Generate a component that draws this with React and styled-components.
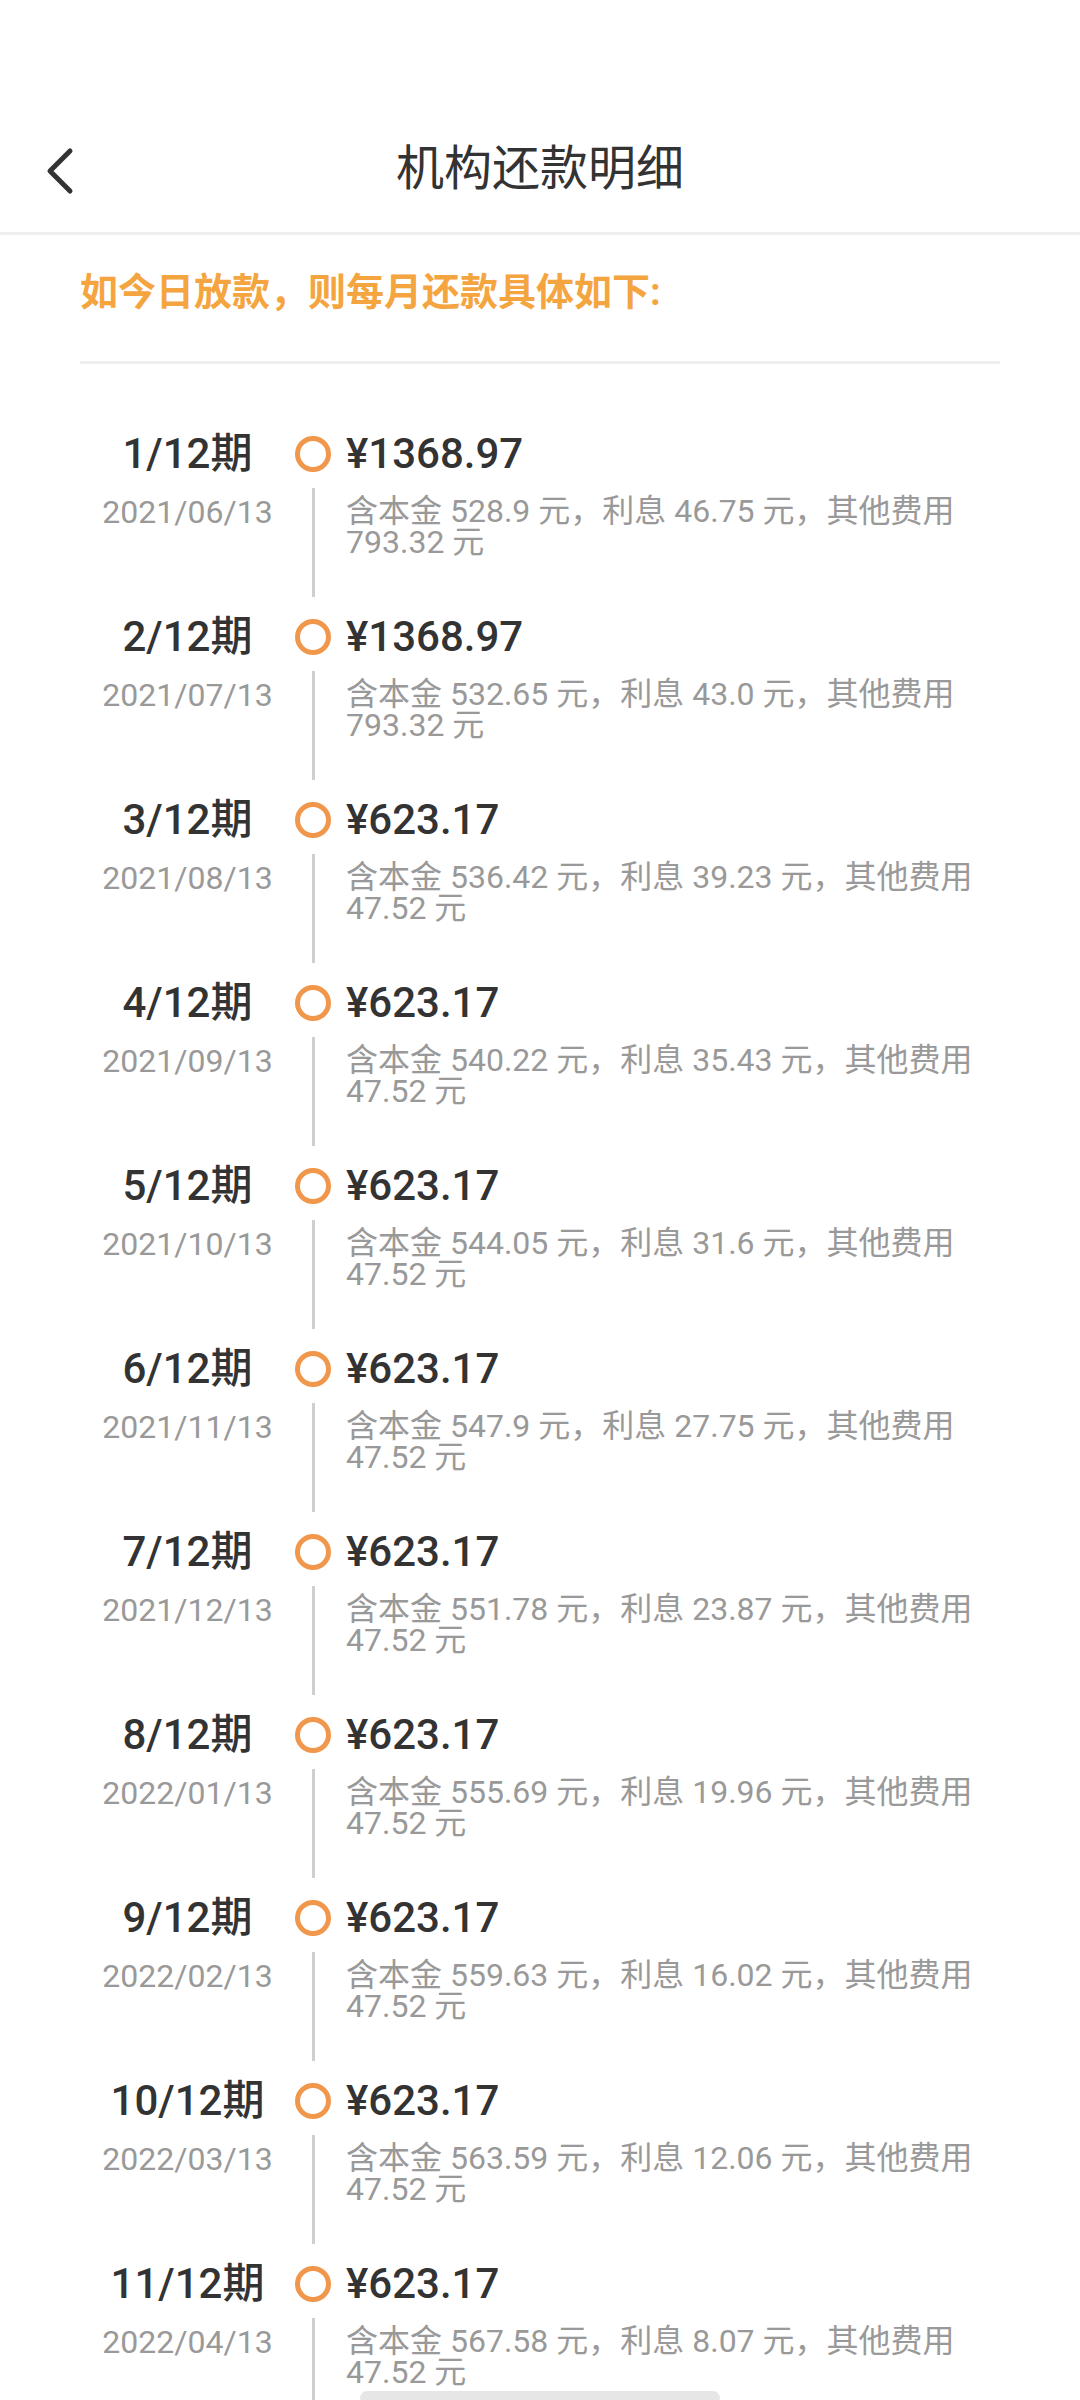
import React from 'react'
import styled, { createGlobalStyle } from 'styled-components'

const GlobalStyle = createGlobalStyle`
  body {
    margin: 0;
    background: #fff;
    font-family: Roboto, "Noto Sans CJK SC", sans-serif;
    color: #333;
  }
`

const Page = styled.div`
  width: 1080px;
  min-height: 2400px;
  background: #fff;
`

const Header = styled.header`
  padding-top: 106px;
  border-bottom: 3px solid #eeeeee;
`

const Toolbar = styled.div`
  height: 126px;
  display: grid;
  grid-template-columns: 140px 1fr 140px;
  align-items: center;
`

const BackButton = styled.button`
  border: 0;
  background: none;
  padding: 0 0 0 44px;
  height: 60px;
  display: flex;
  align-items: center;
  justify-content: flex-start;
  margin-top: 6px;
`

const Title = styled.h1`
  margin: 0;
  text-align: center;
  font-size: 48px;
  font-weight: 400;
  color: #333;
  line-height: 60px;
`

const Intro = styled.div`
  margin: 0 80px;
  padding: 32px 0 44px;
  border-bottom: 3px solid #eeeeee;
  font-size: 38px;
  line-height: 50px;
  font-weight: 700;
  color: #f5a53f;
`

const List = styled.ul`
  list-style: none;
  margin: 0;
  padding: 66px 80px 0;
`

const Item = styled.li`
  display: grid;
  grid-template-columns: 215px 36px 1fr;
  grid-template-rows: 48px 109px;
  row-gap: 10px;
  padding-bottom: 16px;
`

const Period = styled.div`
  align-self: center;
  text-align: center;
  font-size: 42px;
  font-weight: 500;
  color: #333;
  line-height: 48px;
`

const Dot = styled.span`
  align-self: center;
  box-sizing: border-box;
  width: 36px;
  height: 36px;
  border-radius: 50%;
  border: 5px solid #f0974b;
`

const Amount = styled.div`
  align-self: center;
  padding-left: 15px;
  font-size: 42px;
  font-weight: 500;
  color: #333;
  line-height: 48px;
`

const DueDate = styled.div`
  padding-top: 9px;
  text-align: center;
  font-size: 32px;
  line-height: 31px;
  color: #999;
`

const Rail = styled.span`
  justify-self: center;
  width: 3px;
  background: #cfcfcf;
`

const Detail = styled.div`
  padding: 8px 0 0 15px;
  font-size: 32px;
  line-height: 31px;
  color: #999;
`

const HomeBar = styled.div`
  position: fixed;
  left: 360px;
  bottom: -5px;
  width: 360px;
  height: 14px;
  border-radius: 7px;
  background: #e6e6e6;
`

const plans = [
  ['2021/06/13', '1368.97', '528.9', '46.75', '793.32'],
  ['2021/07/13', '1368.97', '532.65', '43.0', '793.32'],
  ['2021/08/13', '623.17', '536.42', '39.23', '47.52'],
  ['2021/09/13', '623.17', '540.22', '35.43', '47.52'],
  ['2021/10/13', '623.17', '544.05', '31.6', '47.52'],
  ['2021/11/13', '623.17', '547.9', '27.75', '47.52'],
  ['2021/12/13', '623.17', '551.78', '23.87', '47.52'],
  ['2022/01/13', '623.17', '555.69', '19.96', '47.52'],
  ['2022/02/13', '623.17', '559.63', '16.02', '47.52'],
  ['2022/03/13', '623.17', '563.59', '12.06', '47.52'],
  ['2022/04/13', '623.17', '567.58', '8.07', '47.52'],
  ['2022/05/13', '623.17', '571.6', '4.05', '47.52'],
]

function BackIcon() {
  return (
    <svg width="34" height="50" viewBox="0 0 34 50">
      <polyline
        points="26,4 6,24 26,44"
        fill="none"
        stroke="#333"
        strokeWidth="5"
        strokeLinecap="round"
        strokeLinejoin="round"
      />
    </svg>
  )
}

export default function App() {
  return (
    <Page>
      <GlobalStyle />
      <Header>
        <Toolbar>
          <BackButton aria-label="返回">
            <BackIcon />
          </BackButton>
          <Title>机构还款明细</Title>
          <span />
        </Toolbar>
      </Header>

      <Intro>如今日放款，则每月还款具体如下:</Intro>

      <List>
        {plans.map(([date, amount, principal, interest, fee], i) => (
          <Item key={date}>
            <Period>{i + 1}/12期</Period>
            <Dot />
            <Amount>¥{amount}</Amount>
            <DueDate>{date}</DueDate>
            <Rail />
            <Detail>
              含本金 {principal} 元，利息 {interest} 元，其他费用 {fee} 元
            </Detail>
          </Item>
        ))}
      </List>

      <HomeBar />
    </Page>
  )
}
